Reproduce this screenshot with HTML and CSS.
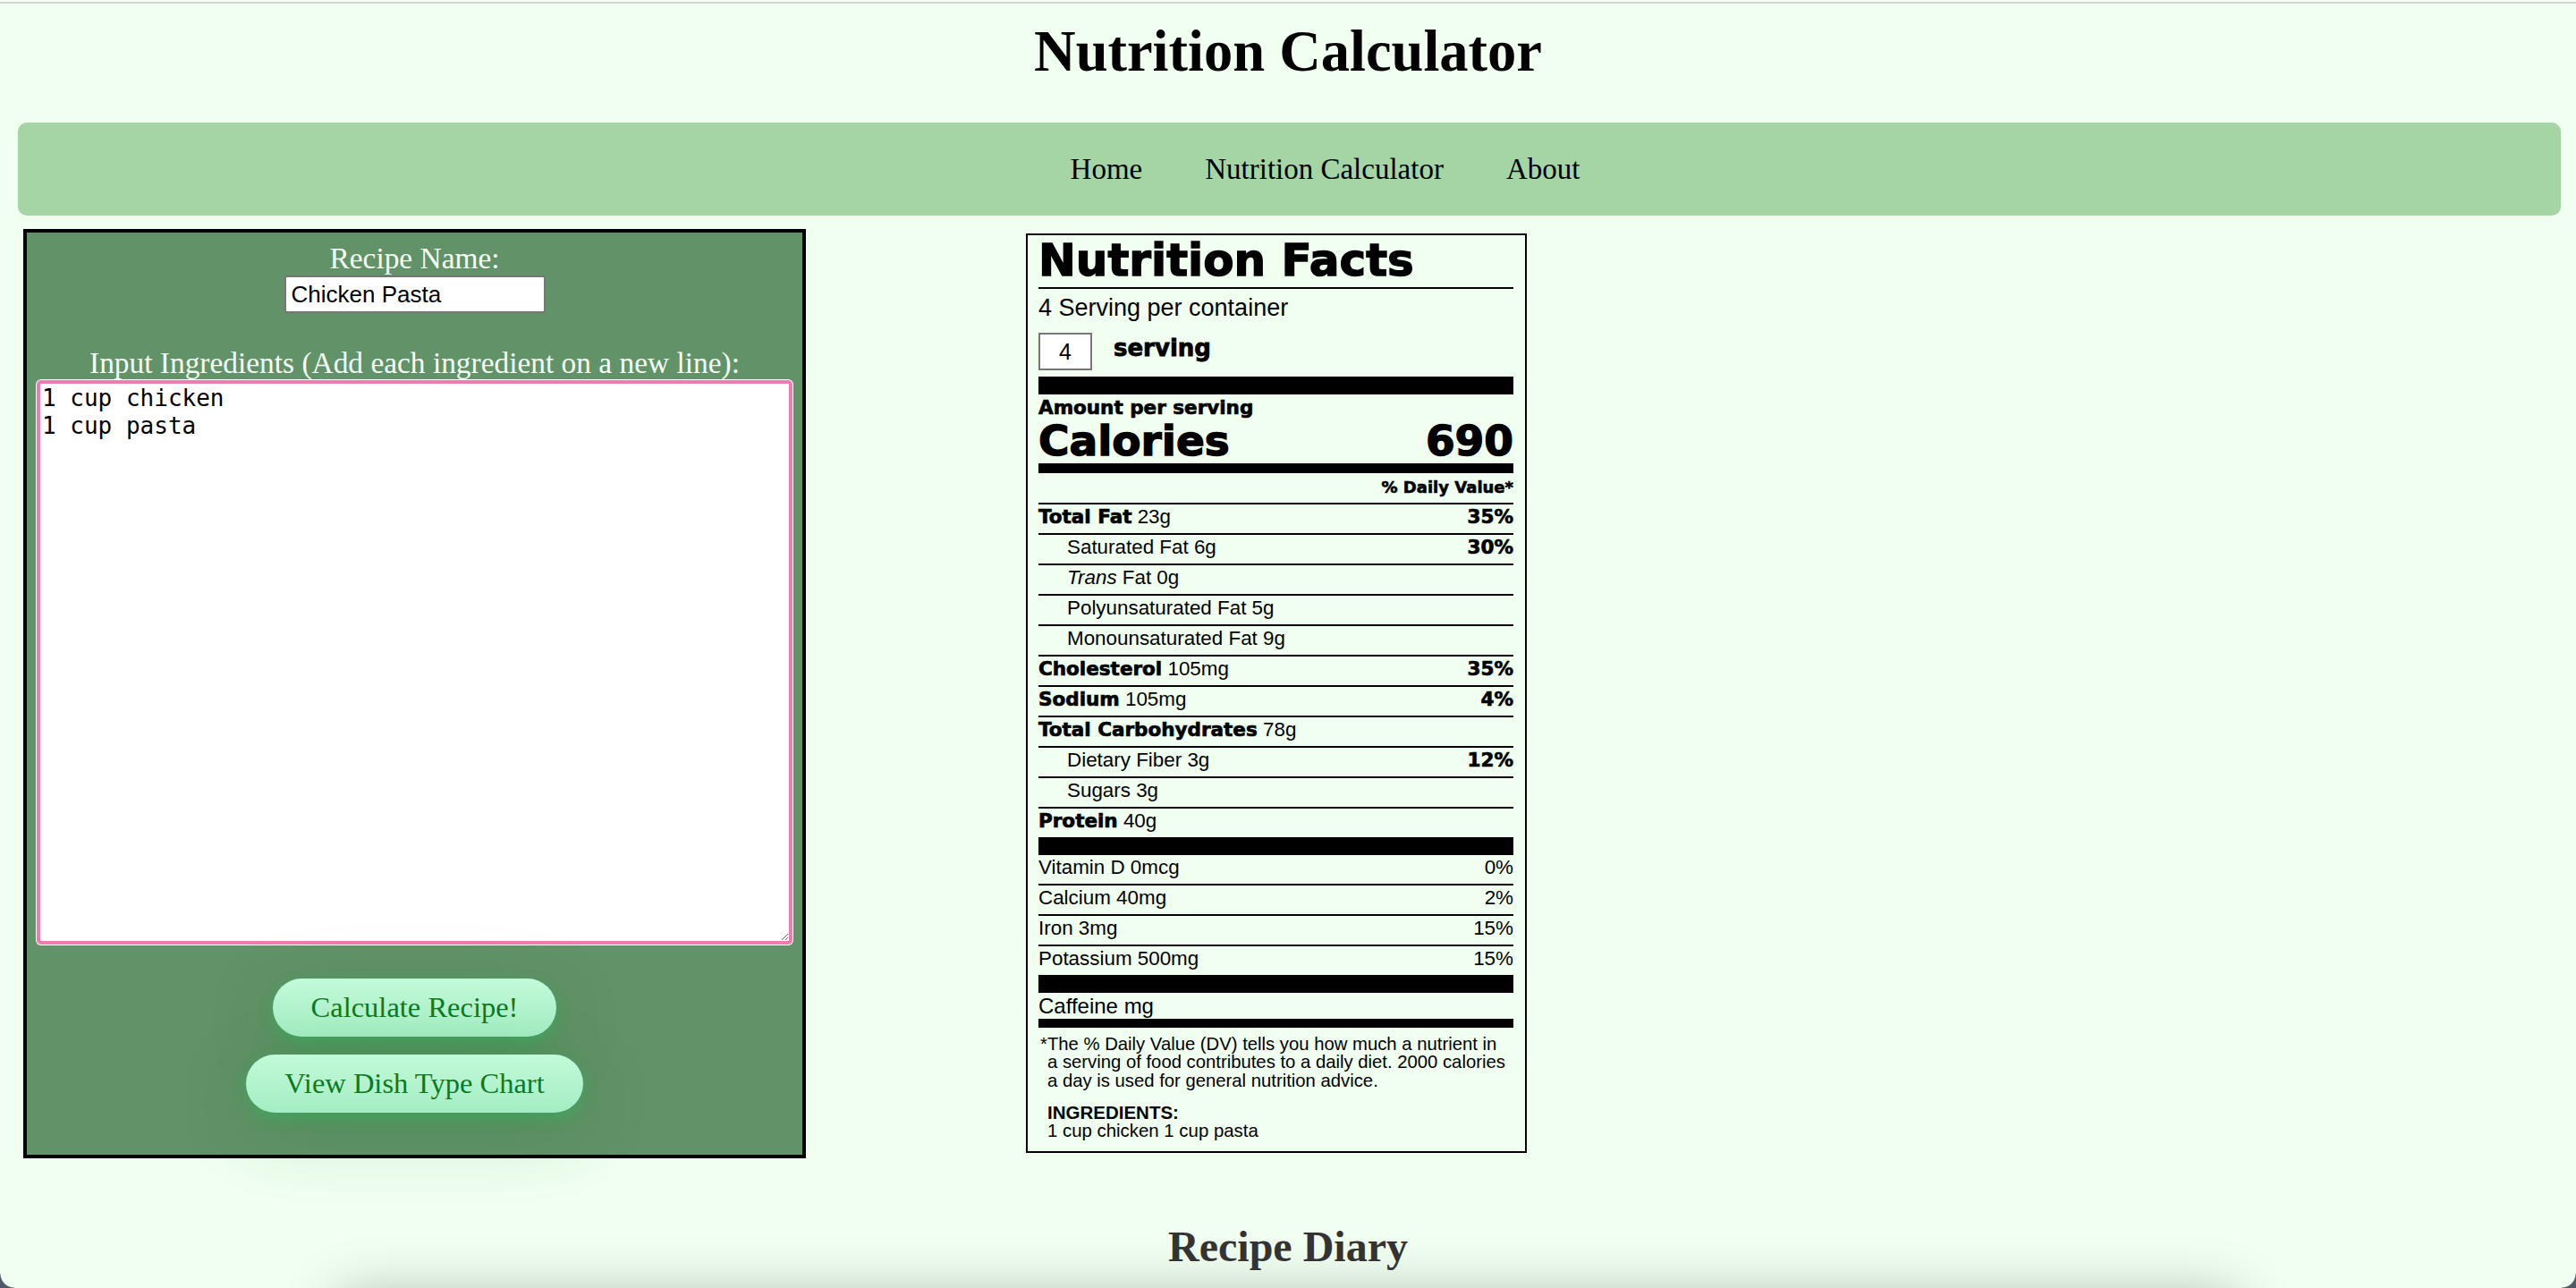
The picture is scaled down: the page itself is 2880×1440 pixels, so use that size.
FILE: index.html
```html
<!DOCTYPE html>
<html lang="en">
<head>
<meta charset="utf-8">
<title>Nutrition Calculator</title>
<link rel="stylesheet" href="styles.css">
</head>
<body>
<header class="site-header">
  <h1 class="site-title">Nutrition Calculator</h1>
</header>
<nav class="site-nav">
  <ul class="nav-list">
    <li><a class="nav-link" href="#">Home</a></li>
    <li><a class="nav-link" href="#">Nutrition Calculator</a></li>
    <li><a class="nav-link" href="#">About</a></li>
  </ul>
</nav>
<main class="calc">
  <section class="recipe-panel">
    <label class="panel-label" for="recipe-name">Recipe Name:</label>
    <input id="recipe-name" class="recipe-name" type="text" value="Chicken Pasta">
    <label class="panel-label ingredients-label" for="ingredients">Input Ingredients (Add each ingredient on a new line):</label>
    <textarea id="ingredients" class="ingredients">1 cup chicken
1 cup pasta</textarea>
    <div class="actions">
      <button class="pill-btn" type="button">Calculate Recipe!</button>
      <button class="pill-btn" type="button">View Dish Type Chart</button>
    </div>
  </section>
  <section class="nf">
    <div class="nf-title">Nutrition Facts</div>
    <div class="nf-servings">4 Serving per container</div>
    <div class="nf-size">
      <input class="nf-size-input" type="text" value="4">
      <span class="nf-size-label">serving</span>
    </div>
    <div class="nf-bar-lg nf-bar-gap"></div>
    <div class="nf-amount">Amount per serving</div>
    <div class="nf-calories"><span>Calories</span><span>690</span></div>
    <div class="nf-bar-md nf-bar-md-gap"></div>
    <div class="nf-dv">% Daily Value*</div>
    <div class="nf-row"><span><span class="nf-b">Total Fat</span> 23g</span><span class="nf-b">35%</span></div>
    <div class="nf-row sub"><span>Saturated Fat 6g</span><span class="nf-b">30%</span></div>
    <div class="nf-row sub"><span><i>Trans</i> Fat 0g</span></div>
    <div class="nf-row sub"><span>Polyunsaturated Fat 5g</span></div>
    <div class="nf-row sub"><span>Monounsaturated Fat 9g</span></div>
    <div class="nf-row"><span><span class="nf-b">Cholesterol</span> 105mg</span><span class="nf-b">35%</span></div>
    <div class="nf-row"><span><span class="nf-b">Sodium</span> 105mg</span><span class="nf-b">4%</span></div>
    <div class="nf-row"><span><span class="nf-b">Total Carbohydrates</span> 78g</span></div>
    <div class="nf-row sub"><span>Dietary Fiber 3g</span><span class="nf-b">12%</span></div>
    <div class="nf-row sub"><span>Sugars 3g</span></div>
    <div class="nf-row"><span><span class="nf-b">Protein</span> 40g</span></div>
    <div class="nf-bar-lg"></div>
    <div class="nf-row plain"><span>Vitamin D 0mcg</span><span>0%</span></div>
    <div class="nf-row"><span>Calcium 40mg</span><span>2%</span></div>
    <div class="nf-row"><span>Iron 3mg</span><span>15%</span></div>
    <div class="nf-row"><span>Potassium 500mg</span><span>15%</span></div>
    <div class="nf-bar-lg"></div>
    <div class="nf-caffeine">Caffeine mg</div>
    <div class="nf-bar-md"></div>
    <p class="nf-foot">*The % Daily Value (DV) tells you how much a nutrient in<br>a serving of food contributes to a daily diet. 2000 calories<br>a day is used for general nutrition advice.</p>
    <div class="nf-ingredients">
      <div class="nf-ing-title">INGREDIENTS:</div>
      <div class="nf-ing-text">1 cup chicken 1 cup pasta</div>
    </div>
  </section>
</main>
<section class="diary">
  <h2 class="diary-title">Recipe Diary</h2>
  <div class="diary-list"></div>
</section>
<div class="window-corner left"></div>
<div class="window-corner right"></div>
</body>
</html>
```

FILE: styles.css
```css
html {
  background: #f0fff0;
}

body {
  margin: 2px 0 0;
  border-top: 2px solid #d2d4d2;
  background: #f0fff0;
  font-family: "Liberation Serif", "Times New Roman", serif;
  color: #000;
}

.site-title {
  margin: 17px 0 0;
  text-align: center;
  font-size: 64.5px;
  font-weight: 700;
  line-height: normal;
}

.site-nav {
  margin: 42px 17px 0 20px;
  height: 104px;
  background: #a5d4a5;
  border-radius: 10px;
  display: flex;
  align-items: center;
}

.nav-list {
  list-style: none;
  margin: 0;
  padding: 0 0 0 80px;
  width: 100%;
  display: flex;
  justify-content: center;
  gap: 70px;
}

.nav-link {
  color: #000;
  text-decoration: none;
  font-size: 33px;
}

.calc {
  display: flex;
  align-items: flex-start;
  gap: 246px;
  margin: 15px 0 0 26px;
}

.recipe-panel {
  width: 875px;
  box-sizing: border-box;
  border: 4px solid #000;
  background: #629267;
  padding: 10px;
  text-align: center;
}

.panel-label {
  display: block;
  font-size: 33.4px;
  line-height: 37px;
  color: #f6fff6;
  white-space: nowrap;
}

.recipe-name {
  display: block;
  margin: 1px auto 0;
  width: 292px;
  height: 42px;
  box-sizing: border-box;
  border: 2px solid #767676;
  border-radius: 3px;
  padding: 0 6px;
  font: 26px "Liberation Sans", Arial, sans-serif;
  background: #fff;
  color: #000;
}

.ingredients-label {
  margin-top: 37px;
}

.ingredients {
  display: block;
  box-sizing: border-box;
  width: calc(100% - 2px);
  height: 631px;
  margin: 1px auto 0;
  border: 4px solid #ef7bb0;
  border-radius: 5px;
  box-shadow: 0 0 0 1px #fff;
  padding: 1px 2px;
  font: 26px/31px "DejaVu Sans Mono", monospace;
  color: #000;
  background: #fff;
  outline: none;
}

.actions {
  display: flex;
  flex-direction: column;
  align-items: center;
  gap: 20px;
  margin: 38px 0 37px;
}

.pill-btn {
  height: 65px;
  padding: 0 43px;
  border: 0;
  border-radius: 33px;
  background: linear-gradient(#c2fad9, #a4edc3);
  color: #0d7a1f;
  font: 32.5px "Liberation Serif", serif;
  box-shadow: 0 6px 16px rgba(40, 190, 90, 0.45), 0 20px 80px rgba(20, 120, 50, 0.22);
  cursor: pointer;
}

/* Nutrition facts label */
.nf {
  width: 560px;
  box-sizing: border-box;
  border: 2px solid #000;
  padding: 2px 13px 12px 12px;
  margin-top: 5px;
  font-family: "Liberation Sans", Arial, sans-serif;
  color: #000;
  background: #f0fff0;
}

.nf-title {
  font-family: "DejaVu Sans", sans-serif;
  font-weight: 700;
  font-size: 50px;
  line-height: 52px;
  padding-bottom: 4px;
  border-bottom: 2px solid #000;
  white-space: nowrap;
  -webkit-text-stroke: 1.4px #000;
}

.nf-servings {
  font-size: 27px;
  line-height: 36px;
  padding-top: 3px;
}

.nf-size {
  display: flex;
  align-items: flex-start;
  gap: 24px;
  margin-top: 10px;
}

.nf-size-input {
  width: 60px;
  height: 42px;
  box-sizing: border-box;
  border: 2px solid #767676;
  padding: 0;
  font: 25px "Liberation Sans", Arial, sans-serif;
  text-align: center;
  background: #fff;
  color: #000;
}

.nf-size-label {
  font-family: "DejaVu Sans", sans-serif;
  font-weight: 700;
  font-size: 26px;
  line-height: 30px;
  margin-top: 2px;
  -webkit-text-stroke: 0.8px #000;
}

.nf-bar-lg {
  height: 20px;
  background: #000;
}

.nf-bar-gap {
  margin-top: 7px;
}

.nf-amount {
  font-family: "DejaVu Sans", sans-serif;
  font-weight: 700;
  font-size: 21.5px;
  line-height: 22px;
  padding-top: 4px;
  -webkit-text-stroke: 0.7px #000;
}

.nf-calories {
  display: flex;
  justify-content: space-between;
  font-family: "DejaVu Sans", sans-serif;
  font-weight: 700;
  font-size: 47px;
  line-height: 44px;
  margin-top: 4px;
  -webkit-text-stroke: 1.4px #000;
}

.nf-bar-md {
  height: 10px;
  background: #000;
}

.nf-bar-md-gap {
  height: 11px;
  margin-top: 3px;
}

.nf-dv {
  text-align: right;
  font-family: "DejaVu Sans", sans-serif;
  font-weight: 700;
  font-size: 18px;
  line-height: 22px;
  margin-top: 5px;
  padding-bottom: 6px;
  -webkit-text-stroke: 0.6px #000;
}

.nf-row {
  display: flex;
  justify-content: space-between;
  box-sizing: border-box;
  height: 34px;
  border-top: 2px solid #000;
  font-size: 22.4px;
  line-height: 28px;
  white-space: nowrap;
}

.nf-row.sub {
  padding-left: 32px;
}

.nf-row.plain {
  border-top: 0;
  height: 32px;
}

.nf-b {
  font-family: "DejaVu Sans", sans-serif;
  font-weight: 700;
  font-size: 21.5px;
  -webkit-text-stroke: 0.7px #000;
}

.nf-caffeine {
  font-size: 24px;
  line-height: 29px;
  height: 29px;
}

.nf-foot {
  margin: 8px 0 0;
  padding-left: 10px;
  text-indent: -8px;
  font-size: 20.3px;
  line-height: 20.3px;
  white-space: nowrap;
}

.nf-ingredients {
  margin-top: 15px;
  padding-left: 10px;
}

.nf-ing-title {
  font-weight: 700;
  font-size: 20.5px;
  line-height: 21px;
}

.nf-ing-text {
  font-size: 20.4px;
  line-height: 21px;
}

/* Recipe diary */
.diary {
  margin-top: 71px;
}

.diary-title {
  margin: 0;
  text-align: center;
  font-size: 48px;
  font-weight: 700;
  line-height: normal;
  color: #333;
}

.diary-list {
  width: 2120px;
  height: 400px;
  margin: 30px auto 0;
  background: #f0fff0;
  box-shadow: 0 0 60px rgba(0, 0, 0, 0.3);
}

/* rounded window corners of the screenshot frame */
.window-corner {
  position: fixed;
  bottom: 0;
  width: 16px;
  height: 16px;
}

.window-corner.left {
  left: 0;
  background: radial-gradient(circle at 100% 0, transparent 15px, #4f5b66 16px);
}

.window-corner.right {
  right: 0;
  background: radial-gradient(circle at 0 0, transparent 15px, #4f5b66 16px);
}
```
